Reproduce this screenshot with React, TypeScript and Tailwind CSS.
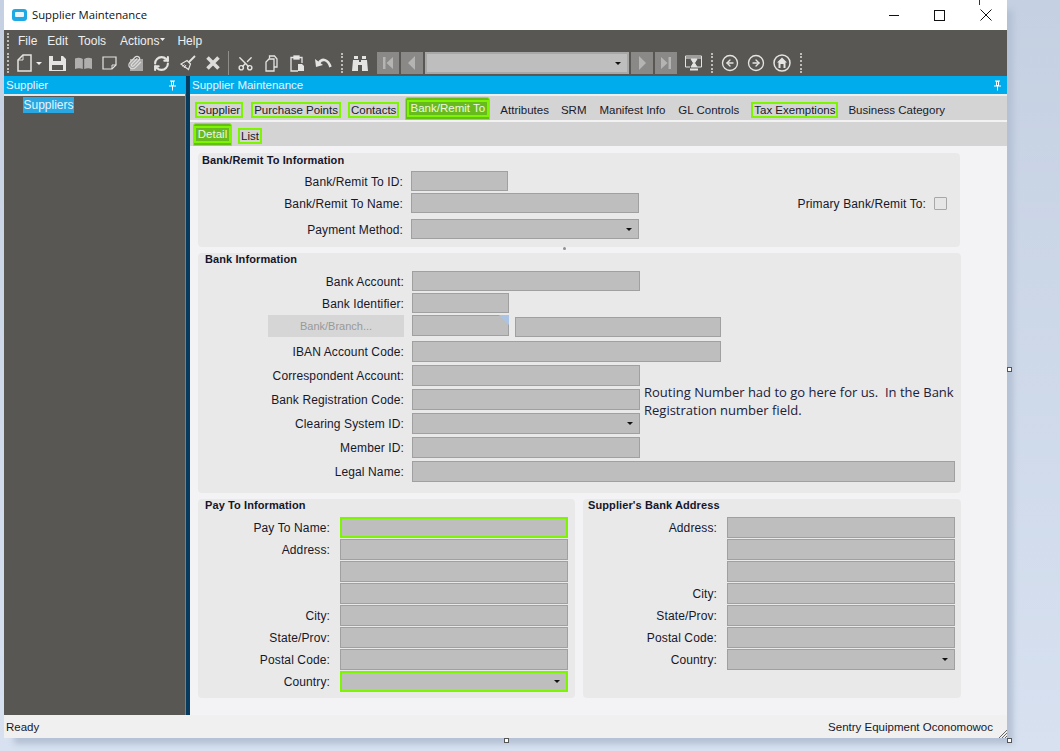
import React from 'react';
import { CircleArrowLeft, CircleArrowRight, RefreshCw, Scissors, Paperclip } from 'lucide-react';

const font = { sans: "font-['Liberation_Sans',Arial,sans-serif]" };

const Pin = () => (
  <svg width="9" height="11" viewBox="0 0 9 11" className="text-white">
    <path d="M2 0.5h5v1H6v4h2v1H5v4H4v-4H1v-1h2v-4H2z" fill="currentColor" />
    <rect x="4" y="2" width="1" height="3" fill="#00acec" />
  </svg>
);

const Grip = () => (
  <div className="h-[20px] w-[2px] border-l-2 border-dotted border-[#bdbcb9]" />
);

const Slot = ({ children }: { children: React.ReactNode }) => (
  <div className="flex h-[22px] w-[26px] items-center justify-center text-[#e4e4e2]">{children}</div>
);

const NavButton = ({ kind }: { kind: 'first' | 'prev' | 'next' | 'last' }) => (
  <div className="flex h-[22px] w-[22px] items-center justify-center bg-[#8a8988]">
    <svg width="14" height="14" viewBox="0 0 14 14" fill="#b4b4b2">
      {kind === 'first' && <path d="M2 1h2.500v12H2zM12 1v12L5.500 7z" />}
      {kind === 'prev' && <path d="M10 0v14L3 7z" />}
      {kind === 'next' && <path d="M4 0v14l7-7z" />}
      {kind === 'last' && <path d="M12 1H9.500v12H12zM2 1v12l6.500-6z" />}
    </svg>
  </div>
);

const Toolbar = () => (
  <div className="flex h-[46px] flex-col bg-[#595754]">
    <div className={`flex h-[22px] items-center pl-[3px] text-[12px] text-[#efefef] ${font.sans}`}>
      <div className="h-[16px] w-[2px] border-l-2 border-dotted border-[#bdbcb9]" />
      <span className="ml-[9px]">File</span>
      <span className="ml-[10px]">Edit</span>
      <span className="ml-[10px]">Tools</span>
      <span className="ml-[14px]">Actions</span>
      <svg width="5" height="3" viewBox="0 0 5 3" className="mb-[3px] ml-[1px]"><path d="M0 0h5L2.500 3z" fill="#efefef" /></svg>
      <span className="ml-[12px]">Help</span>
    </div>
    <div className="flex h-[24px] items-center pb-[2px] pl-[3px]">
      <Grip />
      <div className="ml-[2px] flex items-center">
        <Slot>
          <svg width="15" height="18" viewBox="0 0 15 18" fill="none" stroke="currentColor" strokeWidth="1.500">
            <path d="M6 1h8v16H1V6z" />
            <path d="M6 1v5H1" strokeWidth="1" />
          </svg>
        </Slot>
        <svg width="6" height="3" viewBox="0 0 6 3" className="-ml-[1px]"><path d="M0 0h6L3 3z" fill="#efefef" /></svg>
        <div className="ml-[2px]"><Slot>
          <svg width="17" height="16" viewBox="0 0 17 16" fill="currentColor">
            <path d="M0 1h14l3 3v12H0zM4 1v5h8V1zM3 10v5h11v-5z" fillRule="evenodd" />
          </svg>
        </Slot></div>
        <Slot>
          <svg width="17" height="13" viewBox="0 0 17 13" fill="#b0afad">
            <path d="M0 1.500c2.500-1 5.500-1 7.800 0.500V12C5.500 11 2.500 11 0 12zM9.200 2c2.300-1.500 5.300-1.500 7.800-0.500V12c-2.500-1-5.500-1-7.800 0z" />
          </svg>
        </Slot>
        <Slot>
          <svg width="15" height="14" viewBox="0 0 15 14" fill="none" stroke="currentColor" strokeWidth="1.200">
            <path d="M1 1h13v8l-4 4H1z" />
            <path d="M14 9h-4v4" strokeWidth="1" />
          </svg>
        </Slot>
        <Slot>
          <div className="relative h-[16px] w-[15px]">
            <div className="absolute bottom-0 right-0 h-[12px] w-[13px] bg-[#a9a8a6]" />
            <Paperclip size={15} strokeWidth={2} className="absolute -left-[1px] top-0 text-[#dcdcdc]" />
          </div>
        </Slot>
        <Slot><RefreshCw size={17} strokeWidth={3} /></Slot>
        <Slot>
          <svg width="17" height="17" viewBox="0 0 17 17" fill="none" stroke="currentColor">
            <path d="M16 1l-6 6" strokeWidth="1.800" />
            <path d="M8 5.500l3.500 3.500-2 5.500L2 9z" strokeWidth="1.200" />
            <path d="M5 13l2-3M3.500 11.500l2-2" strokeWidth="1" />
          </svg>
        </Slot>
        <Slot>
          <svg width="14" height="14" viewBox="0 0 14 14" fill="none" stroke="#dcdcda" strokeWidth="3.600"><path d="M1.500 1.500l11 11M12.500 1.500l-11 11" /></svg>
        </Slot>
        <div className="ml-[2px] h-[24px] w-px bg-[#8f8e8b]" />
        <div className="ml-[3px]"><Slot><Scissors size={17} strokeWidth={2} className="-rotate-90" /></Slot></div>
        <Slot>
          <svg width="13" height="17" viewBox="0 0 13 17" fill="none" stroke="currentColor" strokeWidth="1.300">
            <path d="M4.500 3.500V1H9.500l2.500 3v8H9" />
            <path d="M4 4h5v12H1V7z" />
          </svg>
        </Slot>
        <Slot>
          <svg width="15" height="17" viewBox="0 0 15 17" fill="none" stroke="currentColor" strokeWidth="1.300">
            <path d="M4 2.500H1V16h7" />
            <path d="M9 2.500h3V8" />
            <rect x="4" y="1" width="5" height="3" fill="currentColor" />
            <path d="M8 9h4l2 2v5H8z" fill="currentColor" stroke="none" />
          </svg>
        </Slot>
        <Slot>
          <svg width="17" height="12" viewBox="0 0 17 12" fill="none" stroke="currentColor">
            <path d="M4 6c3-5 9-4 11.500 4" strokeWidth="2.600" />
            <path d="M0 2l1 8 7-2z" fill="currentColor" stroke="none" />
          </svg>
        </Slot>
        <div className="ml-[5px]"><Grip /></div>
        <div className="ml-[4px]"><Slot>
          <svg width="16" height="15" viewBox="0 0 16 15" fill="currentColor">
            <path d="M2 0h4v3H2zM10 0h4v3h-4zM1 4h6v2h2V4h6l1 11h-6V9H6v6H0z" />
          </svg>
        </Slot></div>
        <div className="ml-[4px] flex gap-[2px]">
          <NavButton kind="first" />
          <NavButton kind="prev" />
        </div>
        <div className="ml-[2px] flex h-[22px] w-[204px] items-center justify-end border-2 border-[#a8a8a8] bg-[#bebebe] pr-[6px]">
          <svg width="6" height="3" viewBox="0 0 6 3"><path d="M0 0h6L3 3z" fill="#111" /></svg>
        </div>
        <div className="ml-[2px] flex gap-[2px]">
          <NavButton kind="next" />
          <NavButton kind="last" />
        </div>
        <div className="ml-[3px]"><Slot>
          <svg width="17" height="16" viewBox="0 0 17 16" fill="none" stroke="currentColor">
            <path d="M.5 1h16v2H.500zM.5 3v9H5M16.500 3v9H12" />
            <path d="M6 4h6L9.500 8 12 12H6l2.500-4z" fill="currentColor" />
            <path d="M5 14.500h8" strokeWidth="2" />
          </svg>
        </Slot></div>
        <div className="ml-[5px]"><Grip /></div>
        <div className="ml-[4px] flex">
          <Slot><CircleArrowLeft size={18} strokeWidth={1.800} /></Slot>
          <Slot><CircleArrowRight size={18} strokeWidth={1.800} /></Slot>
          <Slot>
            <svg width="18" height="18" viewBox="0 0 18 18">
              <circle cx="9" cy="9" r="8" fill="none" stroke="currentColor" strokeWidth="1.500" />
              <path d="M9 3.500L14 8.500h-1.500V14h-7V8.500H4z" fill="currentColor" />
              <rect x="7.500" y="10" width="3" height="4" fill="#595754" />
            </svg>
          </Slot>
        </div>
        <div className="ml-[5px]"><Grip /></div>
      </div>
    </div>
  </div>
);

const outlined = 'border-2 border-[#7df500] px-[1px] leading-[12px] h-[16px] flex items-center text-[#1a1a2a]';

const TabRow = () => (
  <div className={`flex h-[24px] items-end bg-[#d4d4d4] pl-[5px] text-[11.500px] ${font.sans}`}>
    <div className="mb-[2px] flex items-center">
      <span className={outlined}>Supplier</span>
      <span className={`${outlined} ml-[8px]`}>Purchase Points</span>
      <span className={`${outlined} ml-[7px]`}>Contacts</span>
    </div>
    <div className="ml-[6px] flex h-[23px] w-[85px] items-start justify-center rounded-t-[3px] border border-[#7df500] bg-[#67bb1d] pt-[2px]">
      <span className="flex h-[17px] items-center border-2 border-[#7df500] px-[2px] text-[#eef7e4]">Bank/Remit To</span>
    </div>
    <span className="mb-[1px] ml-[10px] text-[#1a1a2a]">Attributes</span>
    <span className="mb-[1px] ml-[12px] text-[#1a1a2a]">SRM</span>
    <span className="mb-[1px] ml-[13px] text-[#1a1a2a]">Manifest Info</span>
    <span className="mb-[1px] ml-[13px] text-[#1a1a2a]">GL Controls</span>
    <span className={`${outlined} mb-[2px] ml-[12px]`}>Tax Exemptions</span>
    <span className="mb-[1px] ml-[10px] text-[#1a1a2a]">Business Category</span>
  </div>
);

const SubTabRow = () => (
  <div className={`flex h-[24px] items-end bg-[#d4d4d4] pl-[3px] text-[11.500px] ${font.sans}`}>
    <div className="flex h-[23px] w-[39px] items-start justify-center rounded-t-[3px] border border-[#7df500] bg-[#67bb1d] pt-[2px]">
      <span className="flex h-[17px] items-center border-2 border-[#7df500] px-[2px] text-[#eef7e4]">Detail</span>
    </div>
    <span className={`${outlined} mb-[2px] ml-[6px]`}>List</span>
  </div>
);

const Field = ({ label, labelCls, inputCls, combo, green }: { label?: string; labelCls: string; inputCls: string; combo?: boolean; green?: boolean }) => (
  <div className="flex items-center">
    <span className={`${labelCls} pt-[1px] text-right text-[12px] tracking-[0.12px] whitespace-nowrap text-[#17172a]`}>{label}</span>
    <div className={`${inputCls} flex items-center justify-end pr-[6px] ${green ? 'border-2 border-[#7df500]' : 'border border-[#a0a0a0]'} bg-[#bebebe]`}>
      {combo && <svg width="6" height="3" viewBox="0 0 6 3"><path d="M0 0h6L3 3z" fill="#111" /></svg>}
    </div>
  </div>
);

const Panel = ({ title, titleCls, className, children }: { title: string; titleCls: string; className: string; children: React.ReactNode }) => (
  <div className={`rounded-[4px] bg-[#e9e9e9] ${className}`}>
    <div className={`flex h-[14px] items-center text-[11px] font-bold tracking-[0.1px] text-[#15152a] ${titleCls}`}>{title}</div>
    {children}
  </div>
);

const BankRemitPanel = () => {
  const l = 'w-[205px] mr-[8px]';
  return (
    <Panel title="Bank/Remit To Information" titleCls="pl-[4px]" className="h-[94px] w-[762px]">
      <div className="mt-[4px] flex flex-col">
        <Field label="Bank/Remit To ID:" labelCls={l} inputCls="h-[20px] w-[97px]" />
        <div className="mt-[2px] flex items-center justify-between pr-[13px]">
          <Field label="Bank/Remit To Name:" labelCls={l} inputCls="h-[20px] w-[228px]" />
          <div className="flex items-center gap-[8px]">
            <span className="pt-[1px] text-[12px] tracking-[0.12px] text-[#17172a]">Primary Bank/Remit To:</span>
            <div className="h-[13px] w-[13px] rounded-[1px] border border-[#a8a8a8] bg-[#e6e6e6]" />
          </div>
        </div>
        <div className="mt-[6px]">
          <Field label="Payment Method:" labelCls={l} inputCls="h-[20px] w-[228px]" combo />
        </div>
      </div>
    </Panel>
  );
};

const BankInfoPanel = () => {
  const l = 'w-[206px] mr-[8px]';
  return (
    <Panel title="Bank Information" titleCls="pb-[2px] pl-[7px]" className="h-[240px] w-[763px]">
      <div className="mt-[4px] flex flex-col">
        <Field label="Bank Account:" labelCls={l} inputCls="h-[20px] w-[228px]" />
        <div className="mt-[2px]">
          <Field label="Bank Identifier:" labelCls={l} inputCls="h-[20px] w-[97px]" />
        </div>
        <div className="mt-[2px] flex items-start">
          <div className="ml-[70px] mr-[8px] flex h-[22px] w-[136px] items-center justify-center bg-[#d6d6d6] text-[11px] text-[#999999]">Bank/Branch...</div>
          <div className="relative h-[21px] w-[97px] border border-[#a0a0a0] bg-[#bebebe]">
            <div className="absolute -right-px -top-px h-[10px] w-[10px] bg-[#a9c4e4] [clip-path:polygon(0_0,100%_0,100%_100%)]" />
          </div>
          <div className="ml-[6px] mt-[2px] h-[20px] w-[206px] border border-[#a0a0a0] bg-[#bebebe]" />
        </div>
        <div className="mt-[4px]">
          <Field label="IBAN Account Code:" labelCls={l} inputCls="h-[21px] w-[309px]" />
        </div>
        <div className="mt-[3px] flex items-start">
          <div className="flex flex-col gap-[3px]">
            <Field label="Correspondent Account:" labelCls={l} inputCls="h-[21px] w-[228px]" />
            <Field label="Bank Registration Code:" labelCls={l} inputCls="h-[21px] w-[228px]" />
            <Field label="Clearing System ID:" labelCls={l} inputCls="h-[21px] w-[228px]" combo />
            <Field label="Member ID:" labelCls={l} inputCls="h-[21px] w-[228px]" />
          </div>
          <p className="ml-[4px] mt-[18px] w-[318px] font-['Open_Sans',sans-serif] text-[13px] leading-[18px] text-[#20203a]">
            Routing Number had to go here for us.&nbsp; In the Bank Registration number field.
          </p>
        </div>
        <div className="mt-[3px]">
          <Field label="Legal Name:" labelCls={l} inputCls="h-[21px] w-[543px]" />
        </div>
      </div>
    </Panel>
  );
};

const AddressPanel = ({ title, titleCls, className, labelCls, inputW, payTo }: { title: string; titleCls: string; className: string; labelCls: string; inputW: string; payTo?: boolean }) => (
  <Panel title={title} titleCls={titleCls} className={className}>
    <div className="mt-[4px] flex flex-col gap-px">
      {payTo && <Field label="Pay To Name:" labelCls={labelCls} inputCls={`h-[21px] ${inputW}`} green />}
      <Field label="Address:" labelCls={labelCls} inputCls={`h-[21px] ${inputW}`} />
      <Field labelCls={labelCls} inputCls={`h-[21px] ${inputW}`} />
      <Field labelCls={labelCls} inputCls={`h-[21px] ${inputW}`} />
      <Field label="City:" labelCls={labelCls} inputCls={`h-[21px] ${inputW}`} />
      <Field label="State/Prov:" labelCls={labelCls} inputCls={`h-[21px] ${inputW}`} />
      <Field label="Postal Code:" labelCls={labelCls} inputCls={`h-[21px] ${inputW}`} />
      <Field label="Country:" labelCls={labelCls} inputCls={`h-[21px] ${inputW}`} combo green={payTo} />
    </div>
  </Panel>
);

const Handle = ({ className }: { className: string }) => (
  <div className={`absolute h-[5px] w-[5px] border border-[#555555] bg-white ${className}`} />
);

export default function App() {
  return (
    <div className={`relative h-[751px] w-[1060px] overflow-hidden bg-gradient-to-b from-[#c5d0e2] to-[#d7e1f0] pl-[4px] ${font.sans}`}>
      <div className="flex h-[738px] w-[1003px] flex-col bg-white shadow-[8px_8px_6px_-2px_#b4c0d4]">
        <div className="flex h-[30px] items-center bg-white">
          <svg width="15" height="12" viewBox="0 0 15 12" className="ml-[8px]">
            <rect width="15" height="12" rx="3" fill="#1fa9e4" />
            <rect x="3" y="3" width="9" height="5" rx="1" fill="#e8f6fc" />
          </svg>
          <span className="ml-[5px] font-['Open_Sans',sans-serif] text-[11.300px] text-[#111111]">Supplier Maintenance</span>
          <div className="ml-auto flex items-center pr-[15px]">
            <div className="h-px w-[10px] bg-[#111111]" />
            <div className="ml-[35px] h-[11px] w-[11px] border border-[#111111]" />
            <svg width="12" height="12" viewBox="0 0 12 12" className="ml-[35px]"><path d="M.5.5l11 11M11.500.5l-11 11" stroke="#111111" fill="none" /></svg>
          </div>
        </div>
        <Toolbar />
        <div className="flex min-h-0 flex-1">
          <div className="flex w-[181px] flex-col bg-[#595754]">
            <div className="flex h-[18px] items-center justify-between bg-[#00acec] pl-[2px] pr-[8px] pt-[1px] text-[11.500px] text-[#e8f6fc]">
              <span>Supplier</span>
              <Pin />
            </div>
            <div className="h-[2px] bg-[#e6e6e6]" />
            <div className="pl-[19px] pt-[1px]">
              <span className="flex h-[16px] w-[51px] items-center justify-center bg-[#2aa6e0] text-[12px] text-[#e6f4fa]">Suppliers</span>
            </div>
          </div>
          <div className="w-px bg-[#7d7d7d]" />
          <div className="w-[4px] bg-[#063b5e]" />
          <div className="flex min-w-0 flex-1 flex-col bg-[#f3f3f5]">
            <div className="flex h-[18px] items-center justify-between bg-[#00acec] pl-[2px] pr-[5px] pt-[1px] text-[11.500px] text-[#e8f6fc]">
              <span>Supplier Maintenance</span>
              <Pin />
            </div>
            <div className="h-[2px] bg-[#eeeeee]" />
            <TabRow />
            <div className="h-[2px] bg-[#f2f2f2]" />
            <SubTabRow />
            <div className="flex flex-col pl-[8px] pt-[7px]">
              <BankRemitPanel />
              <div className="flex h-[6px] w-[762px] items-center pl-[365px]">
                <div className="mb-[4px] h-[3px] w-[3px] rounded-full bg-[#909090]" />
              </div>
              <BankInfoPanel />
              <div className="mt-[6px] flex gap-[8px]">
                <AddressPanel title="Pay To Information" titleCls="pb-[2px] pl-[7px]" className="h-[199px] w-[377px]" labelCls="w-[132px] mr-[10px]" inputW="w-[228px]" payTo />
                <AddressPanel title="Supplier's Bank Address" titleCls="pb-[2px] pl-[5px]" className="h-[199px] w-[378px]" labelCls="w-[134px] mr-[10px]" inputW="w-[228px]" />
              </div>
            </div>
          </div>
        </div>
        <div className="relative flex h-[23px] items-center justify-between bg-[#f0f0f0] pl-[2px] pr-[14px] pt-[3px] text-[11.500px] text-[#17172a]">
          <span>Ready</span>
          <span>Sentry Equipment Oconomowoc</span>
          <svg width="8" height="8" viewBox="0 0 8 8" className="absolute bottom-0 right-0"><path d="M0 8l8-8M3 8l5-5M6 8l2-2" stroke="#666666" fill="none" /></svg>
        </div>
      </div>
      <Handle className="left-[1007px] top-[367px]" />
      <Handle className="left-[504px] top-[738px]" />
      <Handle className="left-[1007px] top-[738px]" />
      <div className="absolute left-[979px] top-0 h-[5px] w-px bg-[#333333]" />
    </div>
  );
}
